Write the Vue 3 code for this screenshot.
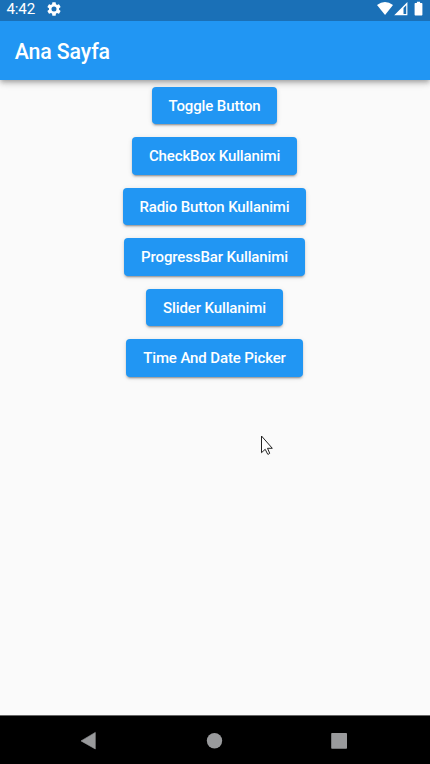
<script setup>
const pages = [
  'Toggle Button',
  'CheckBox Kullanimi',
  'Radio Button Kullanimi',
  'ProgressBar Kullanimi',
  'Slider Kullanimi',
  'Time And Date Picker',
]
</script>

<template>
  <div class="screen">
    <header class="top">
      <div class="status">
        <span class="clock">4:42</span>
        <svg class="gear" viewBox="2 2 20 20" width="14" height="14">
          <path fill="#fff" fill-rule="evenodd" d="M19.14 12.94c.04-.3.06-.61.06-.94s-.02-.64-.07-.94l2.03-1.58a.49.49 0 0 0 .12-.61l-1.92-3.32a.49.49 0 0 0-.59-.22l-2.39.96a7 7 0 0 0-1.62-.94l-.36-2.54A.48.48 0 0 0 13.92 2.4h-3.84a.48.48 0 0 0-.48.41l-.36 2.54c-.59.24-1.13.57-1.62.94l-2.39-.96a.49.49 0 0 0-.59.22L2.72 8.87a.48.48 0 0 0 .12.61l2.03 1.58a6 6 0 0 0 0 1.88l-2.03 1.58a.49.49 0 0 0-.12.61l1.92 3.32c.12.22.37.29.59.22l2.39-.96c.5.38 1.03.7 1.62.94l.36 2.54c.05.24.24.41.48.41h3.84c.24 0 .44-.17.47-.41l.36-2.54a7 7 0 0 0 1.62-.94l2.39.96c.22.08.47 0 .59-.22l1.92-3.32a.48.48 0 0 0-.12-.61zM12 15.6a3.6 3.6 0 1 1 0-7.2 3.6 3.6 0 0 1 0 7.2z" />
        </svg>
        <div class="indicators">
          <svg width="48" height="16" viewBox="0 0 48 16" fill="#fff">
            <path d="M0 4Q8-2.200 16 4L8.050 14.100Z" />
            <path fill-rule="evenodd" d="M17.200 14.300L30.400 .900V14.300ZM26.500 7V13.100H29.200V4.300Z" />
            <path d="M39.900 .700h3.200v1.400h1.600q.7 0 .7.7v11q0 .7-.7.7h-6.400q-.7 0-.7-.7V2.800q0-.7.7-.7H39.900Z" />
          </svg>
        </div>
      </div>
      <h1 class="title">Ana Sayfa</h1>
    </header>
    <main class="content">
      <button v-for="page in pages" :key="page" class="button">{{ page }}</button>
    </main>
    <nav class="nav">
      <svg width="430" height="48" viewBox="0 0 430 48" fill="#999a9c">
        <path d="M81 24.900L95.300 16.400V33Z" stroke="#999a9c" stroke-width=".6" stroke-linejoin="round" />
        <circle cx="214.500" cy="24.700" r="7.700" />
        <rect x="331.200" y="16.900" width="15.800" height="15.800" rx=".8" />
      </svg>
    </nav>
    <svg class="cursor" width="14" height="21" viewBox="0 0 14 21">
      <path d="M1.500 1V17.700L5.200 14.300L7.700 19.200Q9 19.600 9.700 18.200L7.500 13.300H12.300Z" fill="#fff" stroke="#222" stroke-width="1" />
    </svg>
  </div>
</template>

<style>
body {
  margin: 0;
}
</style>

<style scoped>
.screen {
  position: relative;
  display: flex;
  flex-direction: column;
  width: 430px;
  height: 764px;
  overflow: hidden;
  background: #fafafa;
  font-family: Roboto, sans-serif;
}
.top {
  flex: none;
  height: 79.700px;
  background: #2196f3;
  color: #fff;
  box-shadow: 0 2px 4px -1px rgba(0, 0, 0, .2), 0 4px 5px rgba(0, 0, 0, .14), 0 1px 10px rgba(0, 0, 0, .12);
}
.status {
  display: flex;
  align-items: flex-start;
  box-sizing: border-box;
  height: 21px;
  padding: 1px 5.500px 0 6.500px;
  background: #1a70b7;
}
.clock {
  width: 40.500px;
  font-size: 15.200px;
  letter-spacing: -.2px;
  line-height: 17px;
}
.gear {
  margin-top: 1px;
}
.indicators {
  height: 16px;
  margin-left: auto;
}
.indicators svg {
  display: block;
}
.title {
  margin: 0;
  padding-left: 14.700px;
  font-size: 21.300px;
  font-weight: 500;
  letter-spacing: -.12px;
  line-height: 61px;
}
.content {
  flex: 1;
  display: flex;
  flex-direction: column;
  align-items: center;
  gap: 12.800px;
  padding: 6.900px 1px 0 0;
}
.button {
  height: 37.700px;
  padding: 1px 16.900px 0;
  border: 0;
  border-radius: 4px;
  background: #2196f3;
  color: #fff;
  font: 500 15px/36.700px Roboto, sans-serif;
  letter-spacing: -.12px;
  white-space: nowrap;
  box-shadow: 0 3px 1px -2px rgba(0, 0, 0, .2), 0 2px 2px rgba(0, 0, 0, .14), 0 1px 5px rgba(0, 0, 0, .12);
}
.nav {
  flex: none;
  height: 48px;
  border-top: 1px solid #666;
  background: #000;
}
.nav svg {
  display: block;
}
.cursor {
  position: absolute;
  left: 260px;
  top: 435px;
}
</style>
